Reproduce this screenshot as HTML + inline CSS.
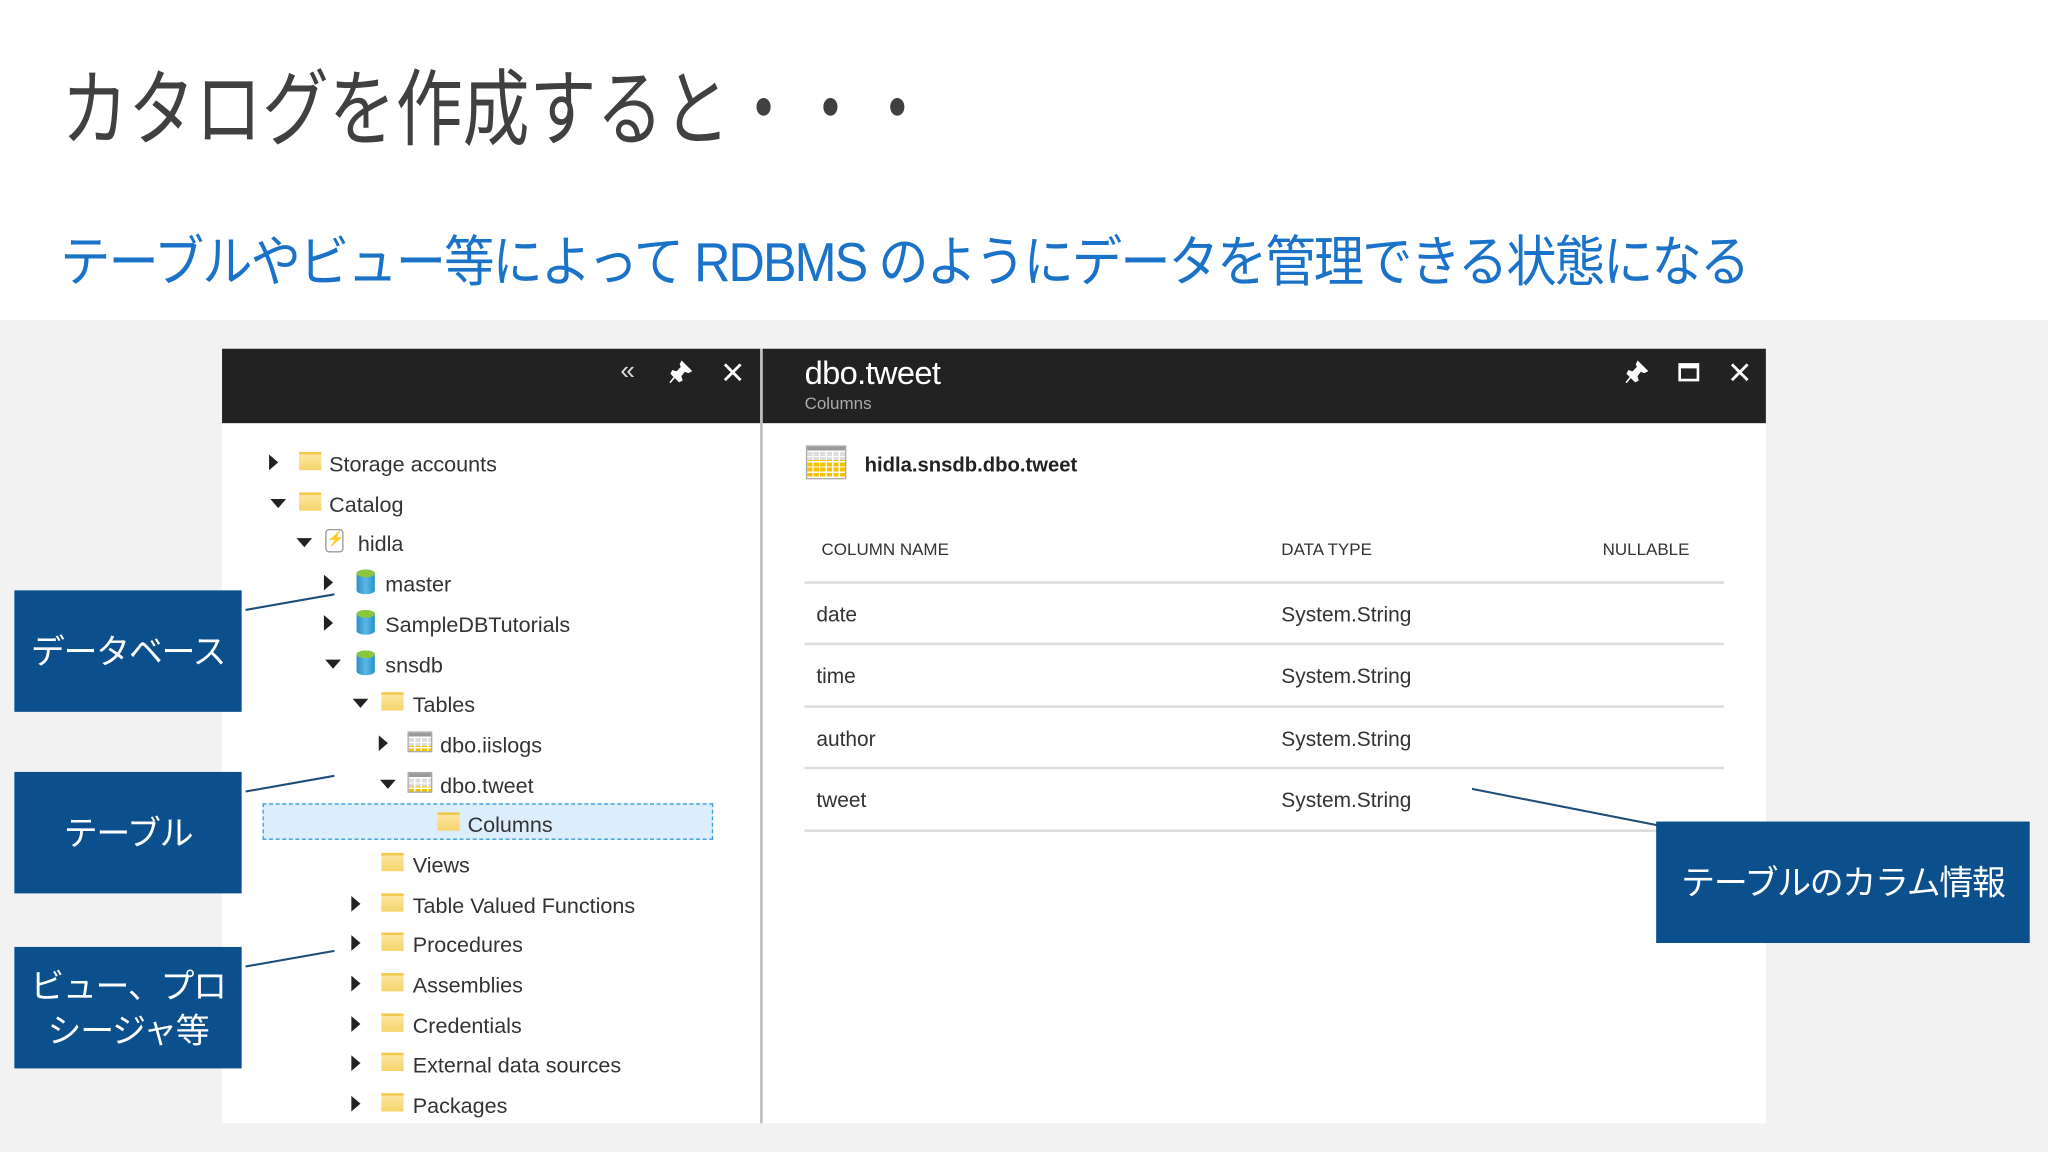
<!DOCTYPE html>
<html><head><meta charset="utf-8"><style>
html,body{margin:0;padding:0;width:2048px;height:1152px;overflow:hidden;background:#fff}
#w{position:absolute;left:0;top:0;width:1568px;height:882px;transform:scale(1.30612);transform-origin:0 0;font-family:"Liberation Sans","Noto Sans CJK JP",sans-serif}
.a{position:absolute}
.t{position:absolute;font-size:16.5px;color:#333;line-height:20px;white-space:nowrap;transform:translateY(-8px)}
.fold{position:absolute;width:17px;height:14px;border-top:2px solid #f1c84a;transform:translateY(-8px);box-sizing:border-box;background:linear-gradient(#fbe6a0,#f5d46a)}
.ar{position:absolute;width:0;height:0;transform:translateY(-6px)}
.r{border-left:7px solid #222;border-top:6px solid transparent;border-bottom:6px solid transparent}
.d{border-top:7px solid #222;border-left:6px solid transparent;border-right:6px solid transparent;transform:translateY(-3px)}
.db{position:absolute;width:14px;height:19px;background:linear-gradient(90deg,#2a8fc9,#5bb8e6,#2a8fc9);border-radius:7px/3px;transform:translateY(-10px)}
.db:before{content:"";position:absolute;left:0;top:0;width:14px;height:6px;border-radius:50%;background:#8cc63f}
.tb{position:absolute;width:19px;height:16px;transform:translateY(-9px);background:
linear-gradient(#999 0 3px,transparent 3px),
repeating-linear-gradient(90deg,transparent 0 4px,#fff 4px 5px),
repeating-linear-gradient(transparent 0 3px,#fff 3px 4px),
linear-gradient(#ddd 0 10px,#f2c200 10px);border:1px solid #aaa;box-sizing:border-box}
.box{position:absolute;background:#0b4f8c;color:#fff;font-size:26px;display:flex;align-items:center;justify-content:center;text-align:center;line-height:34px;letter-spacing:-1px}
.hd{position:absolute;font-size:13px;color:#333;transform:translateY(-8px)}
.cell{position:absolute;font-size:16px;color:#333;transform:translateY(-8px)}
.hl{position:absolute;left:616px;width:704px;height:2px;background:#ddd}
</style></head><body><div id="w">
<div class="a" style="left:0;top:245px;width:1568px;height:637px;background:#f2f2f3"></div>
<div class="a" style="left:47px;top:44px;font-size:64px;color:#404040;line-height:80px;white-space:nowrap;transform:scaleX(0.8);transform-origin:0 0">カタログを作成すると・・・</div>
<div class="a" style="left:46px;top:174px;font-size:42px;color:#1a73c8;line-height:54px;white-space:nowrap;letter-spacing:-1.6px;transform:scaleX(0.917);transform-origin:0 0">テーブルやビュー等によって RDBMS のようにデータを管理できる状態になる</div>

<div class="a" style="left:170px;top:267px;width:412px;height:593px;background:#fff"></div>
<div class="a" style="left:170px;top:267px;width:412px;height:57px;background:#222"></div>
<div class="a" style="left:582px;top:267px;width:2px;height:593px;background:#bbb"></div>
<div class="a" style="left:475px;top:273px;color:#ddd;font-size:20px">«</div>
<svg class="a" style="left:512px;top:276px" width="18" height="18" viewBox="0 0 18 18"><path d="M10 1 L17 8 L15 9 L12 8 L9 12 L10 15 L8 16 L2 10 L3 8 L6 9 L10 5 L9 3Z M5 12 L1 17" fill="#fff" stroke="#fff" stroke-width="1.2"/></svg>
<svg class="a" style="left:553px;top:277px" width="16" height="16"><path d="M2 2L14 14M14 2L2 14" stroke="#fff" stroke-width="2.2"/></svg>

<div class="a" style="left:201px;top:615px;width:345px;height:28px;background:#dcedfc;border:1px dashed #3aa0d8;box-sizing:border-box"></div>

<div class="ar r" style="left:206px;top:354px"></div><div class="fold" style="left:229px;top:354px"></div><div class="t" style="left:252px;top:354px">Storage accounts</div>
<div class="ar d" style="left:207px;top:385px"></div><div class="fold" style="left:229px;top:385px"></div><div class="t" style="left:252px;top:385px">Catalog</div>
<div class="ar d" style="left:227px;top:415px"></div><div class="a" style="left:249px;top:405px;width:14px;height:18px;border:1.5px solid #999;border-radius:3px;box-sizing:border-box;color:#3a9ad9;font-size:11px;text-align:center;line-height:15px">⚡</div><div class="t" style="left:274px;top:415px">hidla</div>
<div class="ar r" style="left:248px;top:446px"></div><div class="db" style="left:273px;top:446px"></div><div class="t" style="left:295px;top:446px">master</div>
<div class="ar r" style="left:248px;top:477px"></div><div class="db" style="left:273px;top:477px"></div><div class="t" style="left:295px;top:477px">SampleDBTutorials</div>
<div class="ar d" style="left:249px;top:508px"></div><div class="db" style="left:273px;top:508px"></div><div class="t" style="left:295px;top:508px">snsdb</div>
<div class="ar d" style="left:270px;top:538px"></div><div class="fold" style="left:292px;top:538px"></div><div class="t" style="left:316px;top:538px">Tables</div>
<div class="ar r" style="left:290px;top:569px"></div><div class="tb" style="left:312px;top:569px"></div><div class="t" style="left:337px;top:569px">dbo.iislogs</div>
<div class="ar d" style="left:291px;top:600px"></div><div class="tb" style="left:312px;top:600px"></div><div class="t" style="left:337px;top:600px">dbo.tweet</div>
<div class="fold" style="left:335px;top:630px"></div><div class="t" style="left:358px;top:630px">Columns</div>
<div class="fold" style="left:292px;top:661px"></div><div class="t" style="left:316px;top:661px">Views</div>
<div class="ar r" style="left:269px;top:692px"></div><div class="fold" style="left:292px;top:692px"></div><div class="t" style="left:316px;top:692px">Table Valued Functions</div>
<div class="ar r" style="left:269px;top:722px"></div><div class="fold" style="left:292px;top:722px"></div><div class="t" style="left:316px;top:722px">Procedures</div>
<div class="ar r" style="left:269px;top:753px"></div><div class="fold" style="left:292px;top:753px"></div><div class="t" style="left:316px;top:753px">Assemblies</div>
<div class="ar r" style="left:269px;top:784px"></div><div class="fold" style="left:292px;top:784px"></div><div class="t" style="left:316px;top:784px">Credentials</div>
<div class="ar r" style="left:269px;top:814px"></div><div class="fold" style="left:292px;top:814px"></div><div class="t" style="left:316px;top:814px">External data sources</div>
<div class="ar r" style="left:269px;top:845px"></div><div class="fold" style="left:292px;top:845px"></div><div class="t" style="left:316px;top:845px">Packages</div>

<div class="a" style="left:584px;top:267px;width:768px;height:593px;background:#fff"></div>
<div class="a" style="left:584px;top:267px;width:768px;height:57px;background:#222"></div>
<div class="a" style="left:616px;top:270px;color:#fff;font-size:25px;line-height:32px;letter-spacing:-0.5px">dbo.tweet</div>
<div class="a" style="left:616px;top:301px;color:#aaa;font-size:13px">Columns</div>
<svg class="a" style="left:1244px;top:276px" width="18" height="18" viewBox="0 0 18 18"><path d="M10 1 L17 8 L15 9 L12 8 L9 12 L10 15 L8 16 L2 10 L3 8 L6 9 L10 5 L9 3Z M5 12 L1 17" fill="#fff" stroke="#fff" stroke-width="1.2"/></svg>
<div class="a" style="left:1285px;top:278px;width:16px;height:14px;border:2px solid #fff;border-top-width:4px;box-sizing:border-box"></div>
<svg class="a" style="left:1324px;top:277px" width="16" height="16"><path d="M2 2L14 14M14 2L2 14" stroke="#fff" stroke-width="2.2"/></svg>
<div class="tb" style="left:617px;top:363px;width:31px;height:26px;transform:translateY(-22px)"></div>
<div class="a" style="left:662px;top:348px;font-size:15.5px;font-weight:bold;color:#222">hidla.snsdb.dbo.tweet</div>
<div class="hd" style="left:629px;top:421px">COLUMN NAME</div>
<div class="hd" style="left:981px;top:421px">DATA TYPE</div>
<div class="hd" style="left:1227px;top:421px">NULLABLE</div>
<div class="hl" style="top:445px"></div>
<div class="cell" style="left:625px;top:471px">date</div><div class="cell" style="left:981px;top:471px">System.String</div>
<div class="hl" style="top:492px"></div>
<div class="cell" style="left:625px;top:518px">time</div><div class="cell" style="left:981px;top:518px">System.String</div>
<div class="hl" style="top:540px"></div>
<div class="cell" style="left:625px;top:566px">author</div><div class="cell" style="left:981px;top:566px">System.String</div>
<div class="hl" style="top:587px"></div>
<div class="cell" style="left:625px;top:613px">tweet</div><div class="cell" style="left:981px;top:613px">System.String</div>
<div class="hl" style="top:635px"></div>

<svg class="a" style="left:0;top:0" width="1568" height="882"><g stroke="#1f4e79" stroke-width="1.6"><line x1="188" y1="467" x2="256" y2="455"/><line x1="188" y1="606" x2="256" y2="594"/><line x1="188" y1="740" x2="256" y2="728"/><line x1="1127" y1="604" x2="1270" y2="632"/></g></svg>
<div class="box" style="left:11px;top:452px;width:174px;height:93px">データベース</div>
<div class="box" style="left:11px;top:591px;width:174px;height:93px">テーブル</div>
<div class="box" style="left:11px;top:725px;width:174px;height:93px">ビュー、プロ<br>シージャ等</div>
<div class="box" style="left:1268px;top:629px;width:286px;height:93px">テーブルのカラム情報</div>
</div></body></html>
